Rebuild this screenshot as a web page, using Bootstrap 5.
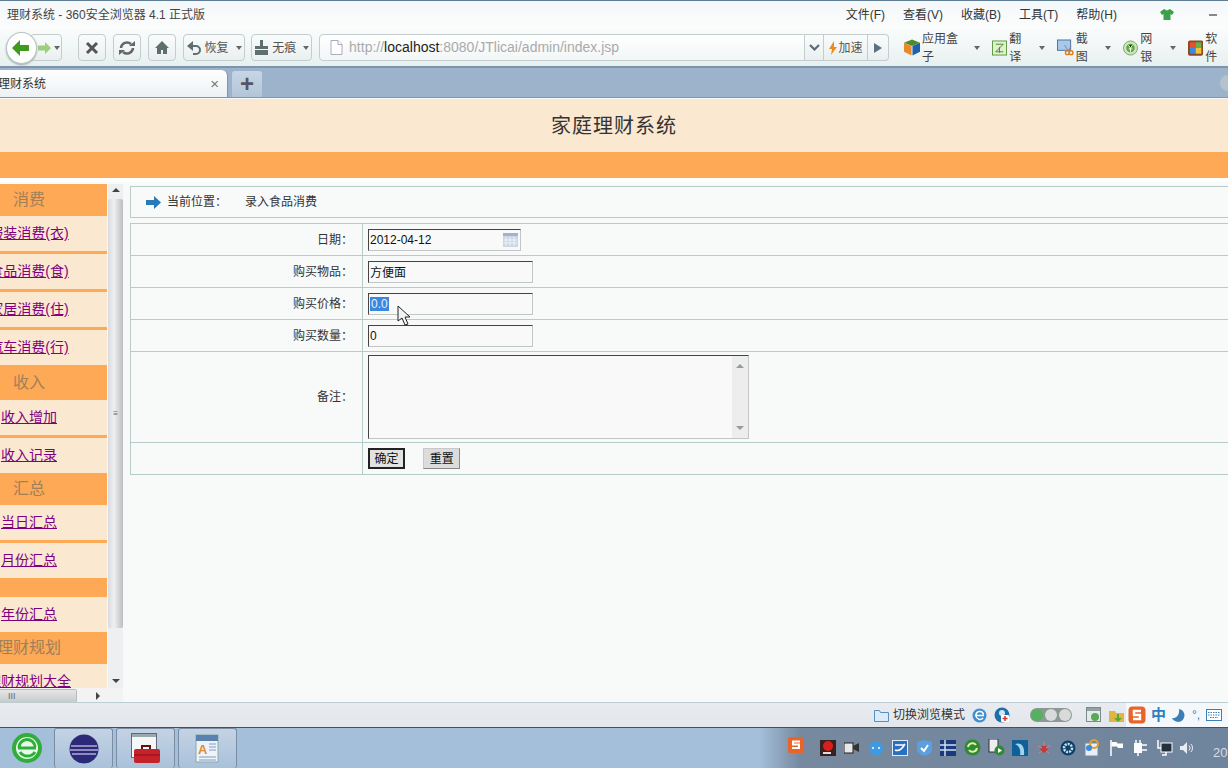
<!DOCTYPE html>
<html lang="zh-CN">
<head>
    <meta charset="UTF-8">
    <title>理财系统</title>
    <link href="https://cdn.jsdelivr.net/npm/bootstrap@5.3.0/dist/css/bootstrap.min.css" rel="stylesheet">
    <style>
        html, body { height: 768px; overflow: hidden; }
        body { font-family: "Liberation Sans", "Noto Sans CJK SC", sans-serif; font-size: 12px; color: #333; background: #f8f9f9; }
        .shell { width: 1228px; height: 768px; overflow: hidden; position: relative; }

        .title-bar { height: 28px; flex: none; border-top: 1px solid #5f7d92; background: linear-gradient(#f4f8fa, #fbfcfc); padding: 0 0 0 7px; color: #444; }
        .menu-item { position: relative; }
        .menu-list { margin-left: auto; gap: 18px; padding-right: 11px; color: #333; }
        .tool-bar { height: 40px; flex: none; padding: 1px 0 0 6px; background: linear-gradient(#fbfcfc, #e7f0f0); border-bottom: 2px solid #7d94ab; color: #555; }
        .tool-btn { height: 27px; border: 1px solid #c3cdcd; border-radius: 4px; background: linear-gradient(#fafcfc, #e9efef); gap: 3px; color: #555; justify-content: center; }
        .round-back { width: 32px; height: 32px; border-radius: 50%; border: 1px solid #b8c4c4; background: #fff; box-shadow: 0 1px 2px #9aa; position: relative; z-index: 1; justify-content: center; }
        .btn-fwd { width: 33px; margin-left: -7px; margin-right: 16px; padding-left: 7px; }
        .btn-square { width: 29px; margin-right: 7px; }
        .btn-wide { margin-right: 6px; }
        .addr-box { width: 505px; height: 27px; margin-left: 1px; border: 1px solid #c3cdcd; border-radius: 4px 0 0 4px; background: linear-gradient(#fff, #f2f6f6); font-size: 14px; color: #aaa; padding-left: 10px; gap: 6px; }
        .addr-box b { font-weight: 400; color: #222; }
        .addr-side { height: 27px; border: 1px solid #c3cdcd; border-left: 0; background: linear-gradient(#fafcfc, #e9efef); justify-content: center; gap: 2px; }
        .caret-mini { width: 0; height: 0; border: 3px solid transparent; border-top: 4px solid #666; border-bottom: 0; flex: none; }
        .tool-link { gap: 2px; color: #444; }
        .tool-link .caret-mini { margin-left: 5px; }

        .tab-strip { height: 30px; flex: none; background: #9db3cb; border-bottom: 1px solid #7f95ad; align-items: flex-end; }
        .tab-page { width: 228px; height: 27px; background: linear-gradient(#fff, #edf1f3); border-radius: 0 6px 0 0; border-right: 1px solid #7f95ad; padding: 0 8px 0 0; overflow: hidden; }
        .tab-page span:first-child { margin-left: -2px; }
        .tab-close { margin-left: auto; color: #777; font-size: 15px; line-height: 1; }
        .tab-add { width: 30px; height: 26px; margin-left: 4px; background: linear-gradient(#c8d6e4, #b2c5d8); border-radius: 3px 3px 0 0; color: #556; font-size: 24px; font-weight: 700; line-height: 1; justify-content: center; }
        .tab-round { width: 16px; height: 16px; border-radius: 50%; background: #b4c2d0; margin: 0 -8px 6px auto; }

        .site-head { height: 53px; flex: none; margin-top: 1px; background: #fbe8d0; font-size: 20px; color: #333; justify-content: center; letter-spacing: 1px; }
        .site-band { height: 26px; flex: none; background: #fda955; }
        .site-main { flex: 1 1 auto; min-height: 0; padding-top: 6px; background: linear-gradient(#ffffff 0, #f8f9f9 6px); }

        .side-wrap { width: 123px; flex: none; height: 520px; }
        .side-view { width: 107px; height: 504px; overflow: hidden; background: #fbe8d0; }
        .side-inner { width: 156px; margin-left: -49px; }
        .side-head { height: 32px; background: #fda955; color: #a08058; font-size: 16px; justify-content: center; }
        .side-head.tall { height: 35px; }
        .side-head.low { height: 19px; }
        .side-row { height: 35px; justify-content: center; font-size: 14px; }
        .side-row.ruled { height: 38px; border-bottom: 3px solid #fda955; }
        .side-row a { color: #800080; }
        .scroll-v { position: absolute; left: 108px; top: 0; width: 15px; height: 504px; background: #eeeff0; }
        .scroll-v-thumb { width: 15px; height: 429px; margin-top: 15px; background: linear-gradient(90deg, #d8dadf, #f0f0f3 40%, #bcbdc0); border-radius: 2px; justify-content: center; color: #666; font-size: 8px; }
        .scroll-h { width: 123px; height: 16px; background: #f3f3f4; }
        .scroll-h-thumb { width: 77px; height: 14px; background: linear-gradient(#e6e6e8, #c9cacc); border: 1px solid #bbb; border-left: 0; border-radius: 0 2px 2px 0; color: #666; padding-left: 8px; font-size: 9px; line-height: 1; }
        .arrow-up { width: 0; height: 0; border: 4px solid transparent; border-bottom: 4px solid #444; border-top: 0; }
        .arrow-down { width: 0; height: 0; border: 4px solid transparent; border-top: 4px solid #444; border-bottom: 0; }
        .arrow-right { width: 0; height: 0; border: 4px solid transparent; border-left: 4px solid #444; border-right: 0; }
        .arrow-holder { position: absolute; left: 4px; }

        .work-area { margin-left: 7px; width: 1110px; flex: none; }
        .crumb-box { height: 32px; margin-top: 2px; border: 1px solid #b7cbc9; padding-left: 15px; gap: 6px; color: #333; }
        .crumb-box span + span { margin-left: 12px; }
        .form-grid { margin-top: 5px; width: 1110px; border-collapse: collapse; table-layout: fixed; }
        .form-grid td { border: 1px solid #b7cbc9; padding: 0 0 0 5px; background: transparent; vertical-align: middle; }
        .form-grid tr { height: 32px; }
        .form-grid td.cell-label { width: 232px; text-align: right; padding: 0 9px 0 0; color: #333; }
        .field-in { display: block; width: 165px; height: 22px; border-style: solid; border-width: 1px; border-color: #444 #c2c6c6 #c2c6c6 #444; background: #f9f9f9; font: 12px "Liberation Sans", "Noto Sans CJK SC", sans-serif; color: #111; padding: 0 1px; line-height: 20px; outline: 0; }
        .field-date { width: 153px; position: relative; }
        .field-date svg { position: absolute; right: 2px; top: 3px; }
        .sel-text { background: #3b87e0; color: #e8f0fa; padding: 0 1px; }
        .field-area { width: 381px; height: 84px; position: relative; margin: 1px 0; }
        .area-bar { position: absolute; right: 0; top: 0; bottom: 0; width: 16px; background: #ededed; }
        .area-bar .arrow-up { position: absolute; top: 8px; left: 4px; border-bottom-color: #999; }
        .area-bar .arrow-down { position: absolute; bottom: 8px; left: 4px; border-top-color: #999; }
        .form-btn { width: 37px; height: 21px; padding: 0; border-radius: 0; font-size: 12px; color: #111; background: #dcdcdc; border: 1px solid #c8c8c8; border-right-color: #888; border-bottom-color: #888; line-height: 18px; }
        .form-btn.on { border: 2px solid #222; background: #e2e2e2; margin-right: 15px; }
        .mouse-pointer { position: absolute; left: 397px; top: 305px; z-index: 5; }

        .status-bar { height: 25px; flex: none; border-top: 1px solid #bccdd0; background: linear-gradient(#e8ebef, #e3e6ea); padding-left: 874px; color: #333; gap: 0; position: relative; }
        .ime-bar { position: absolute; left: 1126px; top: 0; width: 102px; height: 24px; background: #f5f8fa; gap: 0; padding-left: 2px; color: #2f7fc0; }
        .task-bar { height: 41px; flex: none; background: linear-gradient(90deg, #a3bfd9 0, #a3bfd9 760px, #76899f 800px, #6f859d 100%); border-top: 1px solid #3f5268; color: #dde; }
        .orb-slot { width: 54px; justify-content: center; }
        .task-slot { width: 59px; height: 40px; margin-right: 3px; border: 1px solid #7a8da3; border-bottom: 0; border-radius: 3px; background: linear-gradient(#c4d3e4, #a9c1da); justify-content: center; }
        .tray-list { position: absolute; left: 784px; bottom: 0; height: 41px; }
        .tray-cell { width: 24px; justify-content: center; }
        .clock-text { font-size: 13px; color: #d6dde5; margin-left: 13px; padding-top: 10px; }
    </style>
</head>
<body>
<div class="shell d-flex flex-column">

    <div class="title-bar d-flex align-items-center">
        <span>理财系统 - 360安全浏览器 4.1 正式版</span>
        <div class="menu-list d-flex align-items-center">
            <span class="menu-item">文件(F)</span>
            <span class="menu-item">查看(V)</span>
            <span class="menu-item">收藏(B)</span>
            <span class="menu-item">工具(T)</span>
            <span class="menu-item">帮助(H)</span>
            <svg class="ms-4" width="16" height="14" viewBox="0 0 16 14"><path d="M5 1 8 2.500 11 1 15 4 13 7 11.500 6V12H4.500V6L3 7 1 4Z" fill="#3aa04a"/></svg>
            <span class="ms-3" style="width:8px;height:2px;background:#888"></span>
        </div>
    </div>

    <div class="tool-bar d-flex align-items-center">
        <div class="round-back d-flex align-items-center">
            <svg width="20" height="18" viewBox="0 0 20 18"><path d="M9 1 1 9l8 8v-5h9V6H9Z" fill="#3f9a1e"/></svg>
        </div>
        <div class="tool-btn btn-fwd d-flex align-items-center">
            <svg width="13" height="12" viewBox="0 0 13 12"><path d="M7 0l6 6-6 6V8.500H0v-5h7Z" fill="#9fcf7d"/></svg>
            <i class="caret-mini"></i>
        </div>
        <div class="tool-btn btn-square d-flex align-items-center">
            <svg width="14" height="14" viewBox="0 0 14 14"><path d="M2 2 12 12M12 2 2 12" stroke="#555" stroke-width="3"/></svg>
        </div>
        <div class="tool-btn btn-square d-flex align-items-center">
            <svg width="18" height="16" viewBox="0 0 18 16" fill="none"><path d="M3 8a6 6 0 0 1 10-4" stroke="#666" stroke-width="2.500"/><path d="M15 8a6 6 0 0 1-10 4" stroke="#666" stroke-width="2.500"/><path d="M11 6h6V1ZM7 10H1v5Z" fill="#666"/></svg>
        </div>
        <div class="tool-btn btn-square d-flex align-items-center">
            <svg width="16" height="15" viewBox="0 0 16 15"><path d="M8 1 1 8h2v6h4v-4h2v4h4V8h2Z" fill="#5f6f6f"/></svg>
        </div>
        <div class="tool-btn btn-wide d-flex align-items-center" style="width:65px">
            <svg width="15" height="14" viewBox="0 0 15 14" fill="none"><path d="M2 5h7a4 4 0 0 1 0 8H6" stroke="#5f6f6f" stroke-width="2"/><path d="M6 0v10L0 5Z" fill="#5f6f6f"/></svg>
            <span>恢复</span><i class="caret-mini ms-1"></i>
        </div>
        <div class="tool-btn btn-wide d-flex align-items-center" style="width:63px">
            <svg width="15" height="15" viewBox="0 0 15 15"><path d="M6 0h3v6h5v3H1V6h5ZM1 10h13v5H1Z" fill="#5f6f6f"/></svg>
            <span>无痕</span><i class="caret-mini ms-1"></i>
        </div>
        <div class="addr-box d-flex align-items-center">
            <svg width="13" height="15" viewBox="0 0 13 15" fill="#fff"><path d="M1 .5h7l4 4v10H1Z" stroke="#aab"/><path d="M8 .5v4h4" stroke="#aab"/></svg>
            <span>http://<b>localhost</b>:8080/JTlicai/admin/index.jsp</span>
        </div>
        <div class="addr-side d-flex align-items-center" style="width:20px">
            <svg width="11" height="7" viewBox="0 0 11 7" fill="none"><path d="M1 1l4.500 4.500L10 1" stroke="#5b6b7b" stroke-width="2.200"/></svg>
        </div>
        <div class="addr-side d-flex align-items-center" style="width:45px">
            <svg width="8" height="14" viewBox="0 0 8 14"><path d="M5 0 0 8h3l-1 6 6-8H5Z" fill="#f08a1d"/></svg>
            <span>加速</span>
        </div>
        <div class="addr-side d-flex align-items-center" style="width:22px;border-radius:0 4px 4px 0">
            <svg width="8" height="10" viewBox="0 0 8 10"><path d="M0 0l8 5-8 5Z" fill="#5c6f86"/></svg>
        </div>
        <div class="d-flex align-items-center" style="margin-left:15px;gap:12px">
            <div class="tool-link d-flex align-items-center">
                <svg width="17" height="17" viewBox="0 0 17 17"><path d="M8.500 0 17 3.500 8.500 7 0 3.500Z" fill="#4f8a2e"/><path d="M0 3.500 8 7v10L0 13Z" fill="#e88a2a"/><path d="M17 3.500 9 7v10l8-4Z" fill="#1e5fae"/></svg>
                <span>应用盒子</span><i class="caret-mini"></i>
            </div>
            <div class="tool-link d-flex align-items-center">
                <svg width="16" height="16" viewBox="0 0 16 16"><rect x=".5" y=".5" width="15" height="15" fill="#dff0d0" stroke="#5a9a3a"/><path d="M4 4h8L4 12h8M8 7v6" stroke="#4a8a2a" fill="none"/></svg>
                <span>翻译</span><i class="caret-mini"></i>
            </div>
            <div class="tool-link d-flex align-items-center">
                <svg width="18" height="17" viewBox="0 0 18 17"><rect x=".5" y=".5" width="14" height="11" fill="#a8c8ec" stroke="#4a6f9f"/><circle cx="11" cy="14" r="2" fill="none" stroke="#e07a1a" stroke-width="1.500"/><circle cx="15" cy="14" r="2" fill="none" stroke="#e07a1a" stroke-width="1.500"/><path d="M8 6 12 12M15 7 12 12" stroke="#888"/></svg>
                <span>截图</span><i class="caret-mini"></i>
            </div>
            <div class="tool-link d-flex align-items-center">
                <svg width="16" height="16" viewBox="0 0 16 16"><circle cx="8" cy="8" r="7.500" fill="#cfe3c0" stroke="#7aa86a"/><circle cx="8" cy="8" r="4.500" fill="#5aa63a"/><path d="M6 5l2 3 2-3M8 8v4M6 9h4" stroke="#fff"/></svg>
                <span>网银</span><i class="caret-mini"></i>
            </div>
            <div class="tool-link d-flex align-items-center">
                <svg width="16" height="16" viewBox="0 0 16 16"><rect width="16" height="16" rx="2" fill="#8a4a2a"/><rect x="2" y="2" width="6" height="6" fill="#e8502a"/><rect x="8" y="2" width="6" height="6" fill="#6ab04a"/><rect x="2" y="8" width="6" height="6" fill="#3a8adf"/><rect x="8" y="8" width="6" height="6" fill="#f2c23a"/></svg>
                <span>软件</span>
            </div>
        </div>
    </div>

    <div class="tab-strip d-flex">
        <div class="tab-page d-flex align-items-center">
            <span>理财系统</span>
            <span class="tab-close">×</span>
        </div>
        <div class="tab-add d-flex align-items-center">+</div>
        <div class="tab-round"></div>
    </div>

    <div class="site-head d-flex align-items-center">家庭理财系统</div>
    <div class="site-band"></div>

    <div class="site-main d-flex">
        <div class="side-wrap position-relative">
            <div class="side-view">
                <div class="side-inner text-center">
                    <div class="side-head d-flex align-items-center">消费</div>
                    <div class="side-row ruled d-flex align-items-center"><a href="#">服装消费(衣)</a></div>
                    <div class="side-row ruled d-flex align-items-center"><a href="#">食品消费(食)</a></div>
                    <div class="side-row ruled d-flex align-items-center"><a href="#">家居消费(住)</a></div>
                    <div class="side-row d-flex align-items-center"><a href="#">汽车消费(行)</a></div>
                    <div class="side-head tall d-flex align-items-center">收入</div>
                    <div class="side-row ruled d-flex align-items-center"><a href="#">收入增加</a></div>
                    <div class="side-row d-flex align-items-center"><a href="#">收入记录</a></div>
                    <div class="side-head d-flex align-items-center">汇总</div>
                    <div class="side-row ruled d-flex align-items-center"><a href="#">当日汇总</a></div>
                    <div class="side-row d-flex align-items-center"><a href="#">月份汇总</a></div>
                    <div class="side-head low d-flex align-items-center"></div>
                    <div class="side-row d-flex align-items-center"><a href="#">年份汇总</a></div>
                    <div class="side-head d-flex align-items-center">理财规划</div>
                    <div class="side-row d-flex align-items-center"><a href="#">理财规划大全</a></div>
                </div>
            </div>
            <div class="scroll-v">
                <div class="scroll-v-thumb d-flex align-items-center">≡</div>
                <i class="arrow-up arrow-holder" style="top:4px"></i>
                <i class="arrow-down arrow-holder" style="bottom:5px"></i>
            </div>
            <div class="scroll-h d-flex align-items-center position-relative">
                <div class="scroll-h-thumb d-flex align-items-center">III</div>
                <i class="arrow-right arrow-holder" style="left:96px;top:4px"></i>
            </div>
        </div>

        <div class="work-area">
            <div class="crumb-box d-flex align-items-center">
                <svg width="15" height="13" viewBox="0 0 15 13"><path d="M8 0l7 6.500L8 13V9H0V4h8Z" fill="#2a7ab8"/></svg>
                <span>当前位置：</span>
                <span>录入食品消费</span>
            </div>
            <table class="form-grid">
                <tr>
                    <td class="cell-label">日期：</td>
                    <td>
                        <div class="field-in field-date">2012-04-12
                            <svg width="15" height="14" viewBox="0 0 15 14"><rect width="15" height="14" fill="#c9d6e6"/><rect y="0" width="15" height="3" fill="#9fb4cc"/><path d="M3 4v9M7 4v9M11 4v9M1 7h13M1 10h13" stroke="#eef2f7"/></svg>
                        </div>
                    </td>
                </tr>
                <tr>
                    <td class="cell-label">购买物品：</td>
                    <td><input class="field-in" type="text" value="方便面" readonly></td>
                </tr>
                <tr>
                    <td class="cell-label">购买价格：</td>
                    <td><div class="field-in"><span class="sel-text">0.0</span></div></td>
                </tr>
                <tr>
                    <td class="cell-label">购买数量：</td>
                    <td><input class="field-in" type="text" value="0" readonly></td>
                </tr>
                <tr style="height:91px">
                    <td class="cell-label">备注：</td>
                    <td>
                        <div class="field-in field-area">
                            <div class="area-bar"><i class="arrow-up"></i><i class="arrow-down"></i></div>
                        </div>
                    </td>
                </tr>
                <tr>
                    <td class="cell-label"></td>
                    <td>
                        <button type="button" class="btn form-btn on">确定</button>
                        <button type="button" class="btn form-btn">重置</button>
                    </td>
                </tr>
            </table>
        </div>
    </div>

    <div class="status-bar d-flex align-items-center">
        <svg width="15" height="13" viewBox="0 0 15 13"><path d="M.5 1.500h5l1 2h8v9H.5Z" fill="#dcebf7" stroke="#5a90bf"/></svg>
        <span class="ms-1" style="font-size:12px">切换浏览模式</span>
        <svg style="margin-left:7px" width="15" height="15" viewBox="0 0 15 15"><circle cx="7.500" cy="7.500" r="7" fill="#3f8fd0"/><path d="M3 7.500h9M4 7.500a3.800 3.800 0 0 1 7.500-1M11 10a4 4 0 0 1-7-2" fill="none" stroke="#fff" stroke-width="1.500"/></svg>
        <svg style="margin-left:7px" width="16" height="16" viewBox="0 0 16 16"><circle cx="8" cy="8" r="7.500" fill="#1f6fa8"/><circle cx="8" cy="6" r="3" fill="#cfe6f5"/><rect x="7" y="8" width="8" height="7" rx="1" fill="#fff"/><path d="M11 9v5M8.500 11.500h5" stroke="#d8312a" stroke-width="1.500"/></svg>
        <svg style="margin-left:20px" width="42" height="14" viewBox="0 0 42 14"><rect width="42" height="14" rx="7" fill="#8a9a92"/><circle cx="7" cy="7" r="6" fill="#55b060"/><circle cx="21" cy="7" r="6" fill="#d8dadb"/><circle cx="35" cy="7" r="6" fill="#d8dadb"/></svg>
        <svg style="margin-left:14px" width="16" height="16" viewBox="0 0 16 16"><rect x=".5" y=".5" width="14" height="14" fill="#e4ebe8" stroke="#7a8a8a"/><rect x="1" y="1" width="13" height="3" fill="#8fa5a5"/><circle cx="9" cy="10" r="4" fill="#5aa85a"/></svg>
        <svg style="margin-left:6px" width="17" height="15" viewBox="0 0 17 15"><path d="M1 3h6l1 2h8v9H1Z" fill="#e3b43f"/><path d="M9 6v4h-3l4 4 4-4h-3V6Z" fill="#5aa63a"/></svg>
        <span style="margin-left:2px">下</span>
        <div class="ime-bar d-flex align-items-center">
            <svg width="18" height="18" viewBox="0 0 18 18"><rect x=".5" y=".5" width="17" height="17" rx="4" fill="#e8642a"/><path d="M13 5H6v4h6v4H5" fill="none" stroke="#fff" stroke-width="2.400"/></svg>
            <span style="margin-left:5px;font-size:15px;font-weight:700">中</span>
            <svg style="margin-left:6px" width="13" height="13" viewBox="0 0 13 13"><path d="M7 0a6.500 6.500 0 1 1-7 9c4 1 8-3 7-9Z" fill="#3a7fb8"/></svg>
            <span style="margin-left:7px;line-height:1">°,</span>
            <svg style="margin-left:6px" width="16" height="12" viewBox="0 0 16 12"><rect x=".5" y=".5" width="15" height="11" fill="#fff" stroke="#3a7fb8"/><path d="M2 3.500h12M2 6h12M4 8.500h8" stroke="#3a7fb8" stroke-dasharray="1.500 1"/></svg>
        </div>
    </div>

    <div class="task-bar d-flex align-items-center">
        <div class="orb-slot d-flex align-items-center">
            <svg width="34" height="34" viewBox="0 0 34 34"><circle cx="17" cy="17" r="15" fill="#2fae3a"/><circle cx="17" cy="17" r="11" fill="#e8f8ea"/><path d="M8 17h18M9 17a8 8 0 0 1 16-1M25 21a9 9 0 0 1-15 0" fill="none" stroke="#2fae3a" stroke-width="3"/></svg>
        </div>
        <div class="task-slot d-flex align-items-center">
            <svg width="30" height="30" viewBox="0 0 30 30"><circle cx="15" cy="15" r="14.500" fill="#2c2a78"/><path d="M2 12h26M1 16h28M3 20h24" stroke="#eef" stroke-width="1.200"/></svg>
        </div>
        <div class="task-slot d-flex align-items-center">
            <svg width="30" height="32" viewBox="0 0 30 32"><rect x=".5" y=".5" width="25" height="24" fill="#f4f6f8" stroke="#667"/><rect x="1" y="1" width="24" height="3" fill="#9aa"/><rect x="3" y="16" width="26" height="14" rx="2" fill="#c5222a"/><path d="M11 16v-3h8v3" fill="none" stroke="#611" stroke-width="2"/><path d="M3 22h26" stroke="#8a1118"/></svg>
        </div>
        <div class="task-slot d-flex align-items-center">
            <svg width="26" height="30" viewBox="0 0 26 30"><rect x="1" y="1" width="22" height="27" fill="#eef3fa" stroke="#8aa"/><rect x="1" y="1" width="22" height="6" fill="#5a80ad"/><text x="3" y="20" font-size="13" font-weight="700" fill="#e08a2e" font-family="Liberation Sans">A</text><path d="M14 10h7M14 13h7M14 16h7M4 23h17M4 26h17" stroke="#7a9cc6"/></svg>
        </div>
        <div class="tray-list d-flex align-items-center">
            <div class="tray-cell d-flex align-items-center" style="margin-right:8px;padding-bottom:6px"><svg width="16" height="16" viewBox="0 0 16 16"><rect width="16" height="16" rx="2" fill="#e8642a"/><path d="M12 4.500H5v3h6v3.500H4" fill="none" stroke="#fff" stroke-width="2"/></svg></div>
            <div class="tray-cell d-flex align-items-center"><svg width="16" height="16" viewBox="0 0 16 16"><rect width="16" height="16" fill="#3a2020"/><circle cx="8" cy="6" r="5" fill="#d8201a"/><rect x="3" y="12" width="8" height="2" fill="#ddd"/></svg></div>
            <div class="tray-cell d-flex align-items-center"><svg width="16" height="14" viewBox="0 0 16 14"><rect y="2" width="9" height="10" fill="#e8e8e8" stroke="#222"/><path d="M9 5l6-3v9L9 8Z" fill="#333"/></svg></div>
            <div class="tray-cell d-flex align-items-center"><svg width="16" height="16" viewBox="0 0 16 16"><circle cx="8" cy="8.500" r="7" fill="#3f9ae0"/><path d="M8 1l3 3H5Z" fill="#3f9ae0"/><circle cx="5" cy="8" r="1" fill="#fff"/><circle cx="11" cy="8" r="1" fill="#fff"/></svg></div>
            <div class="tray-cell d-flex align-items-center"><svg width="16" height="16" viewBox="0 0 16 16"><rect x=".5" y=".5" width="15" height="15" fill="#2a6fc0" stroke="#e0ecf8"/><path d="M3 10c4 2 7-1 10-6M3 5h9" fill="none" stroke="#fff" stroke-width="1.500"/></svg></div>
            <div class="tray-cell d-flex align-items-center"><svg width="15" height="16" viewBox="0 0 15 16"><path d="M7.500 0 15 2v7c0 4-4 6-7.500 7C4 15 0 13 0 9V2Z" fill="#5aa0e0"/><path d="M4 8l3 3 4-6" fill="none" stroke="#fff" stroke-width="2"/></svg></div>
            <div class="tray-cell d-flex align-items-center"><svg width="16" height="16" viewBox="0 0 16 16"><rect width="16" height="16" fill="#1a3a7a"/><path d="M0 5h16M0 10h16" stroke="#cfe0f5" stroke-width="1.500"/><path d="M5 0v16" stroke="#cfe0f5" stroke-width="1.500"/></svg></div>
            <div class="tray-cell d-flex align-items-center"><svg width="17" height="17" viewBox="0 0 17 17"><circle cx="8.500" cy="8.500" r="8" fill="#2f8a35"/><path d="M4 8a4.500 4.500 0 0 1 8-2M13 9a4.500 4.500 0 0 1-8 2" fill="none" stroke="#dff2a0" stroke-width="2"/></svg></div>
            <div class="tray-cell d-flex align-items-center"><svg width="17" height="17" viewBox="0 0 17 17"><rect x="1" y="0" width="9" height="13" fill="#eee" stroke="#333"/><circle cx="11.500" cy="11.500" r="5" fill="#2f8a35"/><path d="M10 9v5l4-2.500Z" fill="#fff"/></svg></div>
            <div class="tray-cell d-flex align-items-center"><svg width="16" height="16" viewBox="0 0 16 16"><rect width="16" height="16" fill="#0f5f98"/><path d="M3 4c6-2 10 2 9 11H8C9 9 7 6 3 4Z" fill="#9fd4ef"/></svg></div>
            <div class="tray-cell d-flex align-items-center"><svg width="14" height="14" viewBox="0 0 14 14"><circle cx="7" cy="8" r="3.500" fill="#c53a3a"/><path d="M1 5l4 2M13 4 9 7M7 1v4M2 12l3-2M12 12 9 10" stroke="#c88"/></svg></div>
            <div class="tray-cell d-flex align-items-center"><svg width="16" height="16" viewBox="0 0 16 16"><circle cx="8" cy="8" r="7.500" fill="#123f66"/><circle cx="8" cy="8" r="4" fill="none" stroke="#bfe4f8" stroke-width="2.500" stroke-dasharray="2 1"/></svg></div>
            <div class="tray-cell d-flex align-items-center"><svg width="16" height="18" viewBox="0 0 16 18"><rect x="1" y="4" width="13" height="13" fill="#e8eef5" stroke="#789"/><circle cx="10" cy="5" r="4" fill="none" stroke="#e0a030" stroke-width="2"/><circle cx="5" cy="9" r="3" fill="#3a8adf"/></svg></div>
            <div class="tray-cell d-flex align-items-center"><svg width="15" height="16" viewBox="0 0 15 16" fill="none"><path d="M2 0v16" stroke="#fff" stroke-width="1.500"/><path d="M2.500 2h5l1 1.500H14V8H9L8 6.500H2.500Z" fill="#fff"/></svg></div>
            <div class="tray-cell d-flex align-items-center"><svg width="15" height="16" viewBox="0 0 15 16"><path d="M1 3h8v10H1Z" fill="#fff"/><path d="M9 5h5M9 10h5" stroke="#fff" stroke-width="1.500"/><path d="M3 3V0M7 3V0M5 13v3" stroke="#fff" stroke-width="1.500"/></svg></div>
            <div class="tray-cell d-flex align-items-center"><svg width="17" height="16" viewBox="0 0 17 16"><rect x="5" y="3" width="11" height="9" fill="#24303c" stroke="#fff"/><path d="M2 0v8h3M10 12v3H6" stroke="#fff" stroke-width="1.500" fill="none"/></svg></div>
            <div class="tray-cell d-flex align-items-center"><svg width="16" height="14" viewBox="0 0 16 14" fill="none"><path d="M0 5h3l4-4v12L3 9H0Z" fill="#e8edf2"/><path d="M9 4.500a3.500 3.500 0 0 1 0 5M11 3a6 6 0 0 1 0 8" stroke="#e8edf2"/></svg></div>
            <span class="clock-text">20</span>
        </div>
    </div>

    <svg class="mouse-pointer" width="14" height="21" viewBox="0 0 14 21"><path d="M1 1v15l4-3 3 7 3-1-3-7h5Z" fill="#f2f4f4" stroke="#222"/></svg>
</div>

<script src="https://cdn.jsdelivr.net/npm/bootstrap@5.3.0/dist/js/bootstrap.bundle.min.js"></script>
</body>
</html>
